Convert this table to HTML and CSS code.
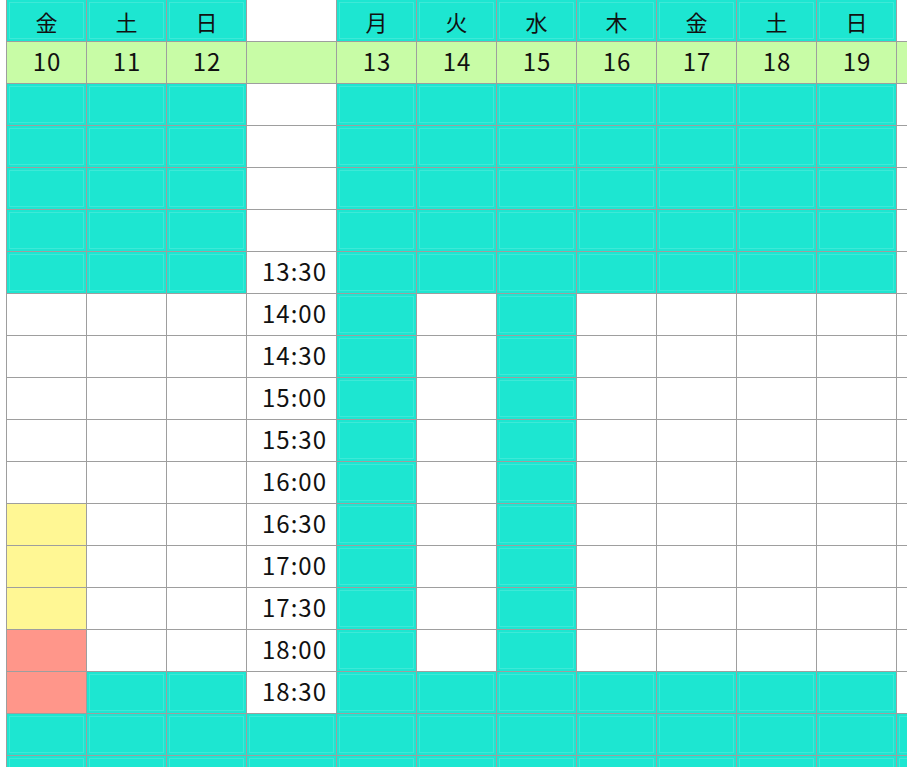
FILE: index.html
```html
<!DOCTYPE html>
<html lang="ja">
<head>
<meta charset="utf-8">
<title>予約表</title>
<link rel="stylesheet" href="styles.css">
</head>
<body>
<div class="viewport">
<div class="sheet">
  <!-- weekday header -->
  <div class="t day">金</div><div class="t day">土</div><div class="t day">日</div><div class="w"></div>
  <div class="t day">月</div><div class="t day">火</div><div class="t day">水</div><div class="t day">木</div><div class="t day">金</div><div class="t day">土</div><div class="t day">日</div><div class="w"></div>
  <!-- dates -->
  <div class="g num">10</div><div class="g num">11</div><div class="g num">12</div><div class="g"></div>
  <div class="g num">13</div><div class="g num">14</div><div class="g num">15</div><div class="g num">16</div><div class="g num">17</div><div class="g num">18</div><div class="g num">19</div><div class="g"></div>
  <!-- rows -->
  <div class="t"></div><div class="t"></div><div class="t"></div><div class="w"></div>
  <div class="t"></div><div class="t"></div><div class="t"></div><div class="t"></div><div class="t"></div><div class="t"></div><div class="t"></div><div class="w"></div>

  <div class="t"></div><div class="t"></div><div class="t"></div><div class="w"></div>
  <div class="t"></div><div class="t"></div><div class="t"></div><div class="t"></div><div class="t"></div><div class="t"></div><div class="t"></div><div class="w"></div>

  <div class="t"></div><div class="t"></div><div class="t"></div><div class="w"></div>
  <div class="t"></div><div class="t"></div><div class="t"></div><div class="t"></div><div class="t"></div><div class="t"></div><div class="t"></div><div class="w"></div>

  <div class="t"></div><div class="t"></div><div class="t"></div><div class="w"></div>
  <div class="t"></div><div class="t"></div><div class="t"></div><div class="t"></div><div class="t"></div><div class="t"></div><div class="t"></div><div class="w"></div>

  <div class="t"></div><div class="t"></div><div class="t"></div><div class="w time">13:30</div>
  <div class="t"></div><div class="t"></div><div class="t"></div><div class="t"></div><div class="t"></div><div class="t"></div><div class="t"></div><div class="w"></div>

  <div class="w"></div><div class="w"></div><div class="w"></div><div class="w time">14:00</div>
  <div class="t"></div><div class="w"></div><div class="t"></div><div class="w"></div><div class="w"></div><div class="w"></div><div class="w"></div><div class="w"></div>

  <div class="w"></div><div class="w"></div><div class="w"></div><div class="w time">14:30</div>
  <div class="t"></div><div class="w"></div><div class="t"></div><div class="w"></div><div class="w"></div><div class="w"></div><div class="w"></div><div class="w"></div>

  <div class="w"></div><div class="w"></div><div class="w"></div><div class="w time">15:00</div>
  <div class="t"></div><div class="w"></div><div class="t"></div><div class="w"></div><div class="w"></div><div class="w"></div><div class="w"></div><div class="w"></div>

  <div class="w"></div><div class="w"></div><div class="w"></div><div class="w time">15:30</div>
  <div class="t"></div><div class="w"></div><div class="t"></div><div class="w"></div><div class="w"></div><div class="w"></div><div class="w"></div><div class="w"></div>

  <div class="w"></div><div class="w"></div><div class="w"></div><div class="w time">16:00</div>
  <div class="t"></div><div class="w"></div><div class="t"></div><div class="w"></div><div class="w"></div><div class="w"></div><div class="w"></div><div class="w"></div>

  <div class="y"></div><div class="w"></div><div class="w"></div><div class="w time">16:30</div>
  <div class="t"></div><div class="w"></div><div class="t"></div><div class="w"></div><div class="w"></div><div class="w"></div><div class="w"></div><div class="w"></div>

  <div class="y"></div><div class="w"></div><div class="w"></div><div class="w time">17:00</div>
  <div class="t"></div><div class="w"></div><div class="t"></div><div class="w"></div><div class="w"></div><div class="w"></div><div class="w"></div><div class="w"></div>

  <div class="y"></div><div class="w"></div><div class="w"></div><div class="w time">17:30</div>
  <div class="t"></div><div class="w"></div><div class="t"></div><div class="w"></div><div class="w"></div><div class="w"></div><div class="w"></div><div class="w"></div>

  <div class="r"></div><div class="w"></div><div class="w"></div><div class="w time">18:00</div>
  <div class="t"></div><div class="w"></div><div class="t"></div><div class="w"></div><div class="w"></div><div class="w"></div><div class="w"></div><div class="w"></div>

  <div class="r"></div><div class="t"></div><div class="t"></div><div class="w time">18:30</div>
  <div class="t"></div><div class="t"></div><div class="t"></div><div class="t"></div><div class="t"></div><div class="t"></div><div class="t"></div><div class="w"></div>

  <div class="t"></div><div class="t"></div><div class="t"></div><div class="t"></div>
  <div class="t"></div><div class="t"></div><div class="t"></div><div class="t"></div><div class="t"></div><div class="t"></div><div class="t"></div><div class="t"></div>

  <div class="t"></div><div class="t"></div><div class="t"></div><div class="t"></div>
  <div class="t"></div><div class="t"></div><div class="t"></div><div class="t"></div><div class="t"></div><div class="t"></div><div class="t"></div><div class="t"></div>
</div>
</div>
</body>
</html>
```

FILE: styles.css
```css
html, body {
  margin: 0;
  padding: 0;
  background: #ffffff;
}

.viewport {
  width: 907px;
  height: 767px;
  overflow: hidden;
}

.sheet {
  display: grid;
  grid-template-columns: 80px 80px 80px 90px repeat(7, 80px) 90px;
  grid-auto-rows: 42px;
  width: max-content;
  margin: -1px 0 0 6px;
  border-top: 1px solid #9e9e9e;
  border-left: 1px solid #9e9e9e;
  font-family: "Noto Sans CJK JP", "Noto Sans", sans-serif;
  color: #111111;
}

.sheet > div {
  box-sizing: border-box;
  border-right: 1px solid #9e9e9e;
  border-bottom: 1px solid #9e9e9e;
  display: flex;
  align-items: center;
  line-height: 1;
}

.day {
  justify-content: center;
  font-size: 22px;
}

.num {
  justify-content: center;
  font-size: 24px;
  letter-spacing: 1px;
  padding: 0 0 3px 1px;
}

.time {
  justify-content: flex-end;
  font-size: 24px;
  letter-spacing: 1px;
  padding: 0 9px 3px 0;
}

.t {
  background: #1de6d1;
  box-shadow: inset 0 0 0 2px #1de6d1, inset 0 0 0 3px #3ee9d7;
}
.w { background: #ffffff; }
.g { background: #c8fca6; }
.y { background: #fff794; }
.r { background: #ff968a; }
```
